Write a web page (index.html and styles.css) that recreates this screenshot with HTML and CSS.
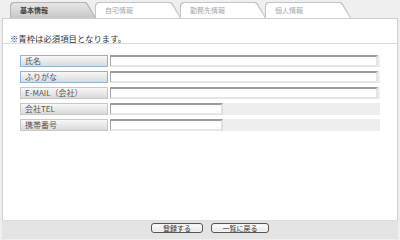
FILE: index.html
```html
<!DOCTYPE html>
<html lang="ja">
<head>
<meta charset="utf-8">
<link rel="stylesheet" href="styles.css">
</head>
<body>
<div class="tabs">
  <div class="tab active"><div class="tab-in">基本情報</div></div>
  <div class="tab"><div class="tab-in">自宅情報</div></div>
  <div class="tab"><div class="tab-in">勤務先情報</div></div>
  <div class="tab"><div class="tab-in">個人情報</div></div>
</div>
<div class="panel">
  <p class="note">※青枠は必須項目となります。</p>
  <div class="form">
    <div class="row"><div class="label req">氏名</div><div class="field"><input class="inp full" type="text"></div></div>
    <div class="row"><div class="label req">ふりがな</div><div class="field"><input class="inp full" type="text"></div></div>
    <div class="row"><div class="label">E-MAIL（会社）</div><div class="field"><input class="inp full" type="text"></div></div>
    <div class="row"><div class="label">会社TEL</div><div class="field"><input class="inp short" type="text"></div></div>
    <div class="row"><div class="label">携帯番号</div><div class="field"><input class="inp short" type="text"></div></div>
  </div>
</div>
<div class="footer">
  <button class="btn b1" type="button">登録する</button>
  <button class="btn b2" type="button">一覧に戻る</button>
</div>
</body>
</html>
```
FILE: styles.css
```css
* { box-sizing: border-box; }
html, body { margin: 0; padding: 0; }
body {
  width: 400px;
  height: 239px;
  overflow: hidden;
  background: #efefef;
  font-family: "Noto Sans CJK JP", "Noto Sans", sans-serif;
  color: #333;
}
.tabs {
  display: flex;
  padding: 2px 0 0 10px;
  height: 18px;
}
.tab {
  width: 86px;
  height: 16px;
  margin-right: -1px;
  padding: 1px 1px 0 1px;
  background: #c4c4c4;
  clip-path: polygon(0 3px, 1px 1px, 3px 0, calc(100% - 10px) 0, calc(100% - 8px) 2px, 100% 100%, 0 100%);
}
.tab-in {
  height: 15px;
  background: #fff;
  clip-path: polygon(0 3px, 1px 1px, 3px 0, calc(100% - 10px) 0, calc(100% - 8px) 2px, 100% 100%, 0 100%);
  font-size: 7px;
  line-height: 15px;
  padding-left: 9px;
  color: #a8a8a8;
}
.tab.active { background: #b4b4b4; }
.tab.active .tab-in {
  background: linear-gradient(#e6e6e6, #c8c8c8);
  color: #444;
  font-weight: bold;
}
.panel {
  margin: 0 2px;
  height: 202px;
  background: #fff;
  border: 1px solid #d0d0d0;
  border-bottom: none;
}
.note {
  margin: 0;
  height: 25px;
  padding: 15px 0 0 7px;
  font-size: 8.4px;
  line-height: 9px;
  color: #333;
  border-bottom: 1px solid #dcdcdc;
}
.form {
  display: flex;
  flex-direction: column;
  gap: 4px;
  padding: 11px 0 0 17px;
}
.row {
  display: flex;
  gap: 2px;
  height: 12px;
}
.label {
  width: 88px;
  height: 12px;
  border: 1px solid #c8c8c8;
  background: linear-gradient(#f8f8f8, #dadada);
  font-size: 8px;
  line-height: 10px;
  padding-left: 4px;
  color: #555;
  white-space: nowrap;
}
.label.req { border-color: #8fb2e6; }
.field {
  width: 270px;
  height: 12px;
  background: #eeeeee;
}
.inp {
  display: block;
  height: 12px;
  margin: 0;
  padding: 0;
  background: #fff;
  border-top: 2px solid #9c9c9c;
  border-left: 1px solid #a4a4a4;
  border-right: 2px solid #e2e2e2;
  border-bottom: 2px solid #e6e6e6;
  outline: none;
}
.inp.full { width: 268px; }
.inp.short { width: 113px; }
.footer {
  margin: 0 2px;
  height: 19px;
  background: #e4e4e4;
  border-top: 1px solid #dddddd;
  display: flex;
  justify-content: center;
  align-items: flex-start;
  gap: 8px;
  padding: 2px 0 0 20px;
}
.btn {
  height: 10px;
  margin: 0;
  padding: 0;
  border: 1px solid #555;
  border-radius: 3px;
  background: linear-gradient(#ffffff, #e6e6e6);
  box-shadow: inset 0 0 0 1px #f4f4f4;
  font-family: "Noto Sans CJK JP", "Noto Sans", sans-serif;
  font-size: 7px;
  line-height: 8px;
  color: #333;
}
.b1 { width: 52px; }
.b2 { width: 58px; }
```
